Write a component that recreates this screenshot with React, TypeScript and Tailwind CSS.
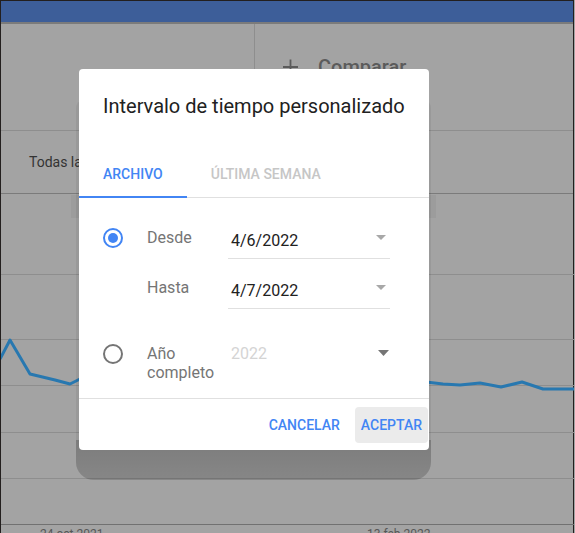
import type { ReactNode } from 'react';

function Radio({ checked }: { checked: boolean }) {
  return (
    <span
      className={`flex h-5 w-5 items-center justify-center rounded-full border-2 ${
        checked ? 'border-[#4285f4]' : 'border-[#757575]'
      }`}
    >
      {checked ? <span className="h-[10px] w-[10px] rounded-full bg-[#4285f4]" /> : null}
    </span>
  );
}

function Caret({ dark }: { dark?: boolean }) {
  if (dark) {
    return (
      <svg width="11" height="6" viewBox="0 0 11 6">
        <path d="M0 0h11L5.5 6z" fill="#757575" />
      </svg>
    );
  }
  return (
    <svg width="10" height="5" viewBox="0 0 10 5">
      <path d="M0 0h10L5 5z" fill="#a8a8a8" />
    </svg>
  );
}

function DateRow({ label, value, radio }: { label: string; value: string; radio?: ReactNode }) {
  return (
    <div className="flex h-[50px]">
      <div className="w-[44px] pt-[19px]">{radio}</div>
      <div className="w-[81px] pt-[19px] text-[16px] leading-[20px] text-[#757575]">{label}</div>
      <div className="flex w-[162px] items-end justify-between border-b border-[#e0e0e0] pb-[7px] pl-[3px] pr-[4px]">
        <span className="text-[16px] leading-[20px] text-[#212121]">{value}</span>
        <span className="mb-auto mt-[26px] flex">
          <Caret />
        </span>
      </div>
    </div>
  );
}

// chart points, in page coordinates
const leftLine = '0,359 10,340 30,374 55,380 70,384 82,378';
const rightLine = '426,382 443,384 460,385 480,383 501,387 522,382 543,389 575,389';

export default function App() {
  return (
    <div className="relative h-[533px] w-[575px] overflow-hidden bg-[#a3a3a3] font-['Roboto',sans-serif]">
      {/* page behind the scrim */}
      <div className="flex h-full w-[574px] flex-col border-x border-t border-[#231f1e]">
        <div className="h-[23px] border-b-2 border-[#7b7b7b] bg-[#3d5e99]" />
        <div className="flex h-[107px] border-b border-[#8e8e8e]">
          <div className="w-[254px] border-r border-[#8e8e8e]" />
          <div className="flex items-start gap-[19px] pl-[27px] pt-[31px] text-[20px] font-medium leading-[24px] text-[#5b5b5b]">
            <svg width="17" height="24" viewBox="0 0 17 24" className="shrink-0">
              <path d="M1 12h15M8.5 4.5v15" stroke="#5b5b5b" strokeWidth="1.8" />
            </svg>
            <span>Comparar</span>
          </div>
        </div>
        <div className="flex h-[63px] items-center border-b border-[#7b7b7b] pl-[28px] text-[14px] text-[#333333]">
          Todas las
        </div>
        <div className="relative flex-1">
          <svg className="absolute left-0 top-0" width="573" height="339" viewBox="1 194 573 339">
            {[274, 339, 385, 432, 478].map((y) => (
              <line key={y} x1="0" x2="575" y1={y + 0.5} y2={y + 0.5} stroke="#8e8e8e" strokeWidth="1" />
            ))}
            <line x1="0" x2="575" y1="524.5" y2="524.5" stroke="#717171" strokeWidth="1" />
            <polyline points={leftLine} fill="none" stroke="#2878b0" strokeWidth="3" strokeLinejoin="round" />
            <polyline points={rightLine} fill="none" stroke="#2878b0" strokeWidth="3" strokeLinejoin="round" />
            <text x="40" y="538" fontSize="12" fill="#575757" fontFamily="Roboto, sans-serif">
              24 oct 2021
            </text>
            <text x="367" y="538" fontSize="12" fill="#575757" fontFamily="Roboto, sans-serif">
              13 feb 2022
            </text>
          </svg>
        </div>
      </div>

      {/* dialog shadow */}
      <div className="absolute left-[71px] top-[195px] h-[23px] w-[365px] bg-black/[0.04]" />
      <div className="absolute left-[76px] top-[100px] h-[380px] w-[355px] rounded-b-[18px] rounded-t-[8px] bg-black/[0.06]" />
      <div className="absolute left-[76px] top-[440px] h-[40px] w-[355px] rounded-b-[18px] bg-gradient-to-b from-black/[0.19] to-black/[0.12]" />

      {/* dialog */}
      <div className="absolute left-[79px] top-[69px] flex h-[381px] w-[350px] flex-col overflow-hidden rounded-[4px] bg-white">
        <div className="h-[81px] pl-6 pt-6 text-[20px] leading-[26px] text-[#212121]">
          Intervalo de tiempo personalizado
        </div>
        <div className="flex h-[48px] border-b border-[#e0e0e0] pt-[2px] text-[14px] font-medium">
          <div className="relative flex items-center px-6 text-[#4285f4]">
            ARCHIVO
            <span className="absolute inset-x-0 -bottom-px h-[2px] bg-[#4285f4]" />
          </div>
          <div className="flex items-center px-6 text-[#c6c6c6]">ÚLTIMA SEMANA</div>
        </div>
        <div className="h-[201px] border-b border-[#e0e0e0] px-6 pt-[11px]">
          <DateRow label="Desde" value="4/6/2022" radio={<Radio checked />} />
          <DateRow label="Hasta" value="4/7/2022" />
          <div className="mt-[35px] flex items-start">
            <div className="w-[44px]">
              <Radio checked={false} />
            </div>
            <div className="w-[81px] text-[16px] leading-[19px] text-[#757575]">Año completo</div>
            <div className="flex w-[162px] items-start justify-between pl-[3px] pr-px">
              <span className="text-[16px] leading-[20px] text-[#d4d4d4]">2022</span>
              <span className="mt-[6px] flex">
                <Caret dark />
              </span>
            </div>
          </div>
        </div>
        <div className="flex h-[51px] items-center justify-end gap-[9px] pr-px text-[14px] font-medium text-[#4285f4]">
          <button className="h-9 rounded-[4px] px-[6px] pt-px">CANCELAR</button>
          <button className="h-9 rounded-[4px] bg-[#ebebeb] px-[6px] pt-px">ACEPTAR</button>
        </div>
      </div>
    </div>
  );
}
